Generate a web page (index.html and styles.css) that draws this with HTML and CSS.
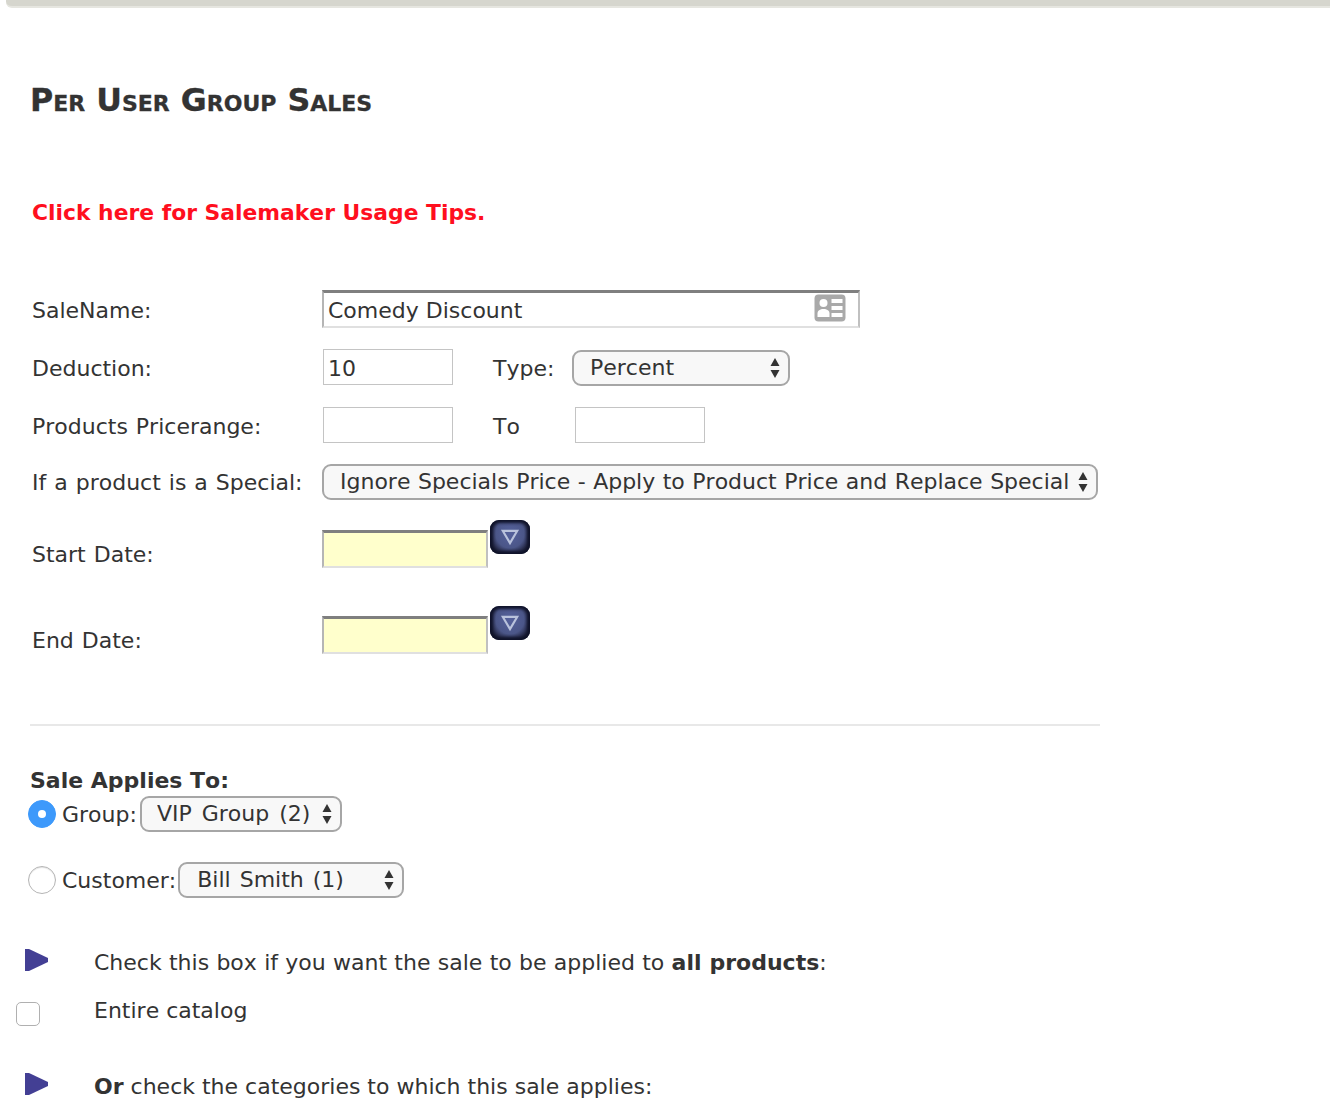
FILE: index.html
```html
<!DOCTYPE html>
<html lang="en">
<head>
<meta charset="utf-8">
<title>Per User Group Sales</title>
<link rel="stylesheet" href="styles.css">
</head>
<body>
<div class="topbar"></div>
<main class="page">
  <h1 class="title">Per User Group Sales</h1>
  <p class="tips"><a href="#">Click here for Salemaker Usage Tips.</a></p>

  <form class="sale-form">
    <div class="row row-name">
      <label class="lbl">SaleName:</label>
      <div class="name-field">
        <input class="inset name-input" type="text" value="Comedy Discount">
        <svg class="contact-icon" viewBox="0 0 32 28" aria-hidden="true">
          <rect x="0.5" y="0.5" width="31" height="27" rx="4" fill="#a9a9a9"/>
          <circle cx="9.5" cy="9" r="4" fill="#fff"/>
          <path d="M3.500 23v-3.500c0-3 2.500-4.500 6-4.500s6 1.500 6 4.500V23z" fill="#fff"/>
          <path d="M17.500 5h11v4h-11zM17.500 12h11v4h-11zM17.500 19h11v4h-11z" fill="#fff"/>
        </svg>
      </div>
    </div>

    <div class="row row-ded">
      <label class="lbl">Deduction:</label>
      <input class="box" type="text" value="10">
      <span class="mid">Type:</span>
      <div class="sel sel-type">
        <select><option>Percent</option></select>
        <svg class="updown" viewBox="0 0 10 20" aria-hidden="true"><path d="M5 0l4.500 8h-9zM5 20l-4.500-8h9z"/></svg>
      </div>
    </div>

    <div class="row row-price">
      <label class="lbl">Products Pricerange:</label>
      <input class="box" type="text">
      <span class="mid mid-to">To</span>
      <input class="box" type="text">
    </div>

    <div class="row row-special">
      <label class="lbl">If a product is a Special:</label>
      <div class="sel sel-special">
        <select><option>Ignore Specials Price - Apply to Product Price and Replace Special</option></select>
        <svg class="updown" viewBox="0 0 10 20" aria-hidden="true"><path d="M5 0l4.500 8h-9zM5 20l-4.500-8h9z"/></svg>
      </div>
    </div>

    <div class="row row-date row-start">
      <label class="lbl">Start Date:</label>
      <input class="inset date-input" type="text">
      <button class="cal" type="button" aria-label="Open calendar">
        <svg viewBox="0 0 20 18" aria-hidden="true"><path d="M3.500 3.500h13L10 14.500z" fill="none" stroke="#b9c2dc" stroke-width="2"/></svg>
      </button>
    </div>

    <div class="row row-date row-end">
      <label class="lbl">End Date:</label>
      <input class="inset date-input" type="text">
      <button class="cal" type="button" aria-label="Open calendar">
        <svg viewBox="0 0 20 18" aria-hidden="true"><path d="M3.500 3.500h13L10 14.500z" fill="none" stroke="#b9c2dc" stroke-width="2"/></svg>
      </button>
    </div>

    <hr class="rule">

    <h2 class="applies">Sale Applies To:</h2>
    <div class="choice choice-group">
      <span class="radio radio-on"></span>
      <span class="choice-text">Group:</span>
      <div class="sel sel-group">
        <select><option>VIP Group (2)</option></select>
        <svg class="updown" viewBox="0 0 10 20" aria-hidden="true"><path d="M5 0l4.500 8h-9zM5 20l-4.500-8h9z"/></svg>
      </div>
    </div>
    <div class="choice choice-customer">
      <span class="radio"></span>
      <span class="choice-text">Customer:</span>
      <div class="sel sel-customer">
        <select><option>Bill Smith (1)</option></select>
        <svg class="updown" viewBox="0 0 10 20" aria-hidden="true"><path d="M5 0l4.500 8h-9zM5 20l-4.500-8h9z"/></svg>
      </div>
    </div>

    <div class="note note-check">
      <svg class="arrow" viewBox="0 0 24 22" aria-hidden="true"><path d="M1 0h4l19 9v4L5 22H1z"/></svg>
      <span>Check this box if you want the sale to be applied to <b>all products</b>:</span>
    </div>
    <div class="catalog">
      <span class="check"></span>
      <span>Entire catalog</span>
    </div>
    <div class="note note-or">
      <svg class="arrow" viewBox="0 0 24 22" aria-hidden="true"><path d="M1 0h4l19 9v4L5 22H1z"/></svg>
      <span><b>Or</b> check the categories to which this sale applies:</span>
    </div>
  </form>
</main>
</body>
</html>
```

FILE: styles.css
```css
* { box-sizing: border-box; }
html, body { margin: 0; padding: 0; background: #fff; }
body {
  font-family: "DejaVu Sans", Verdana, sans-serif;
  font-size: 22px;
  line-height: 26px;
  color: #333;
  height: 1114px;
  overflow: hidden;
  font-kerning: none;
}
.topbar {
  height: 8px;
  margin-left: 6px;
  background: #d6d6ce;
  border-bottom: 2px solid #e6e6e0;
  border-bottom-left-radius: 6px;
}
.page { padding-left: 30px; }
.title {
  margin: 72px 0 0 0;
  font-size: 31.7px;
  line-height: 40px;
  font-variant: small-caps;
  font-weight: bold;
  color: #333;
  -webkit-text-stroke: 0.3px #333;
}
.tips { margin: 80px 0 0 2px; font-weight: bold; font-size: 21.85px; line-height: 26px; }
.tips a { color: #ff0f1e; text-decoration: none; }
.sale-form { margin: 0; }
.row { display: flex; align-items: center; margin-left: 2px; }
.lbl { width: 290px; flex: none; padding-top: 4px; word-spacing: 1px; }
.row-name { margin-top: 64px; height: 38px; }
.row-ded { margin-top: 21px; height: 36px; }
.row-price { margin-top: 22px; height: 36px; }
.row-special { margin-top: 21px; height: 36px; }
.row-special .lbl { padding-top: 2px; }
.row-start { margin-top: 30px; }
.row-end { margin-top: 48px; }
.row-date { height: 38px; align-items: flex-start; }
.row-date .lbl { padding-top: 12px; }
input, select { font: inherit; font-kerning: none; color: #333; }
.inset {
  display: block;
  border-style: solid;
  border-width: 3px 2px 2px;
  border-color: #7f7f7f #c0c0c0 #e0e0e0 #b5b5b5;
  background: #fff;
  padding: 1px 4px 0;
  outline: none;
  border-radius: 0;
}
.name-field { position: relative; width: 538px; height: 38px; }
.name-input { width: 100%; height: 100%; padding-right: 50px; }
.contact-icon { position: absolute; left: 492px; top: 4px; width: 32px; height: 28px; }
.box {
  width: 130px;
  height: 36px;
  margin-left: 1px;
  border: 1px solid #c4c4c4;
  padding: 2px 4px 0;
  background: #fff;
  border-radius: 0;
  outline: none;
  flex: none;
}
.mid { margin-left: 40px; width: 79px; flex: none; padding-top: 4px; }
.mid-to { width: 81px; }
.sel { position: relative; flex: none; }
.sel select {
  appearance: none;
  -webkit-appearance: none;
  display: block;
  width: 100%;
  height: 36px;
  border: 2px solid #a6a6a6;
  border-radius: 9px;
  background: #f8f8f8;
  padding: 0 0 0 16px;
  outline: none;
}
.updown { position: absolute; right: 10px; top: 8px; width: 10px; height: 20px; fill: #333; pointer-events: none; }
.sel-type { width: 218px; margin-top: 2px; }
.sel-special { width: 776px; }
.sel-special select { padding-top: 0; word-spacing: 0.5px; }
.sel-group { width: 202px; }
.sel-group select { padding-left: 15px; word-spacing: 3px; }
.sel-customer { width: 226px; }
.sel-customer select { padding-left: 17px; word-spacing: 2px; }
.date-input { width: 166px; height: 38px; background: #ffffcc; flex: none; }
.cal {
  width: 40px;
  height: 34px;
  margin: -10px 0 0 2px;
  padding: 0;
  border: 0;
  border-radius: 9px;
  background: radial-gradient(ellipse at 50% 40%, #55619c 0, #4b5688 50%, #2c3152 68%, #14172a 85%);
  box-shadow: inset 0 0 3px 3px #10132a;
  flex: none;
  display: flex;
  align-items: center;
  justify-content: center;
}
.cal svg { width: 22px; height: 20px; display: block; }
.rule { border: 0; border-top: 2px solid #e8e8e8; margin: 70px 0 0 0; width: 1070px; height: 0; }
.applies { margin: 42px 0 0 0; font-size: 22px; line-height: 26px; font-weight: bold; color: #333; }
.choice { display: flex; align-items: center; height: 36px; margin-left: -2px; }
.choice-group { margin-top: 2px; }
.choice-customer { margin-top: 30px; }
.choice-text { margin-left: 6px; margin-right: 3px; padding-top: 2px; }
.choice-customer .choice-text { margin-right: 2px; }
.radio {
  width: 28px; height: 28px; border-radius: 50%;
  border: 1px solid #b5b5b5; background: #fff;
  flex: none; position: relative;
  box-shadow: inset 0 1px 1px #e4e4e4;
}
.radio-on { background: #3d99fb; border-color: #3d99fb; box-shadow: none; }
.radio-on::after {
  content: ""; position: absolute; left: 9px; top: 9px;
  width: 8px; height: 8px; border-radius: 50%; background: #fff;
}
.note { display: flex; align-items: flex-start; margin-left: -6px; }
.arrow { width: 24px; height: 22px; fill: #433f94; flex: none; margin-right: 46px; }
.note-check { margin-top: 51px; word-spacing: 0.3px; }
.note-check span { margin-top: 1px; }
.note-or { margin-top: 47px; }
.note-or span { margin-top: 1px; }
.catalog { display: flex; align-items: flex-start; margin: 22px 0 0 -14px; }
.check {
  width: 24px; height: 24px; border: 1px solid #b0b0b0; border-radius: 5px;
  background: #fff; margin: 4px 54px 0 0; flex: none;
}
```
